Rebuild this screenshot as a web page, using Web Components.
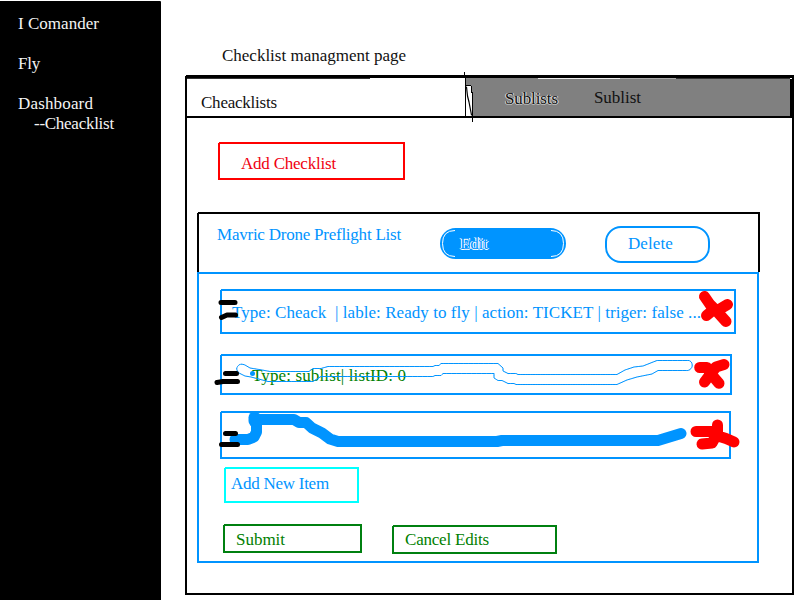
<!DOCTYPE html>
<html lang="en">
<head>
<meta charset="utf-8">
<title>Checklist managment page</title>
<style>
html,body{margin:0;width:800px;height:600px;overflow:hidden;background:#fff}
body{font:17px/20px "Liberation Serif",serif;color:#111}
</style>
</head>
<body>
<checklist-app></checklist-app>
<script>
const define=(name,html,setup)=>{
  const t=document.createElement('template');
  t.innerHTML=html;
  customElements.define(name,class extends HTMLElement{
    constructor(){super();this.attachShadow({mode:'open'}).append(t.content.cloneNode(true));}
    connectedCallback(){if(setup)setup(this);}
  });
};

// A line of text whose letter spacing is adjusted to fill the requested width.
define('fit-text',`<style>:host{display:block;white-space:pre;height:20px;width:max-content}span{display:inline-block}</style><span><slot></slot></span>`,el=>{
  const s=el.shadowRoot.querySelector('span'),w=+el.getAttribute('w');
  const natural=s.getBoundingClientRect().width;
  if(w&&natural)s.style.letterSpacing=((w-natural)/(el.textContent.length-.5))+'px';
});

define('side-nav',`<style>
:host{display:block;box-sizing:border-box;background:#000;color:#f4f4f4;padding:13px 0 0 18px;margin-top:1px;border-top-right-radius:1px}
nav{display:grid;gap:20px}.sub{margin-left:16px}
</style><nav><fit-text w="81">I Comander</fit-text><fit-text w="22">Fly</fit-text><div><fit-text w="75">Dashboard</fit-text><fit-text class="sub" w="80">--Cheacklist</fit-text></div></nav>`);

define('tab-bar',`<style>
:host{display:grid;grid-template-columns:279px 1fr;height:38px;border-bottom:2px solid #000}
.a{padding:15px 0 0 14px}
.b{display:flex;gap:36px;background:#808080;margin-top:1px;padding:9px 0 0 39px;border-right:2px solid #000}
.ghost{padding-top:1px;text-shadow:1px 0 #ddd,-1px 0 #ddd,0 1px #bbb}
</style><div class="a"><fit-text w="76">Cheacklists</fit-text></div><div class="b"><fit-text class="ghost" w="53">Sublists</fit-text><fit-text w="47">Sublist</fit-text></div>`);

define('outline-button',`<style>
:host{display:block;box-sizing:border-box;border:2px solid;flex:none}
:host([pill]){border-radius:16px}
:host([filled]){background:#0094ff;border-color:#0094ff;position:relative}
.ring{display:none}
:host([filled]) .ring{display:block;position:absolute;left:0;top:0}
:host([filled]) ::slotted(*){text-shadow:1px 0 #fff,-1px 0 #fff,0 .5px #fff}
</style><svg class="ring" width="122" height="27" viewBox="0 0 122 27" fill="none" stroke="#fff"><path d="M13 .5Q.5 .5 .5 13.5T13 26.5M109 .5Q121.5 .5 121.5 13.5T109 26.5"/></svg><slot></slot>`);

define('item-row',`<style>:host{display:block;box-sizing:border-box;border:2px solid #0094ff;margin-left:21px}</style><slot></slot>`);

define('list-card',`<style>
:host{display:block;width:563px;color:#0094ff}
header{box-sizing:border-box;height:60px;border:2px solid #000;border-bottom:0;display:flex;align-items:flex-start}
.title{margin:11px 0 0 18px}
.edit{width:126px;height:31px;margin:14px 0 0 39px;padding:4px 0 0 18px}
.del{width:105px;height:37px;margin:12px 0 0 39px;padding:6px 0 0 21px}
section{box-sizing:border-box;width:562px;height:291px;border:2px solid #0094ff;padding-top:15px}
.r1{width:516px;height:45px;padding:12px 0 0 10px}
.r2{width:512px;height:41px;margin-top:20px;padding:10px 0 0 30px;color:#008000}
.r3{width:511px;height:48px;margin-top:16px}
.new{width:135px;height:36px;margin:8px 0 0 25px;padding:5px 0 0 5px;border-color:#0ff}
footer{display:flex;align-items:flex-start;gap:30px;margin:21px 0 0 24px;color:#008000}
.sub{width:139px;height:29px;padding:4px 0 0 11px;border-color:#008010}
.can{width:165px;height:29px;margin-top:1px;padding:3px 0 0 11px;border-color:#008010}
</style>
<header><fit-text class="title" w="184">Mavric Drone Preflight List</fit-text>
<outline-button class="edit" pill filled><fit-text w="28">Edit</fit-text></outline-button>
<outline-button class="del" pill><fit-text w="45">Delete</fit-text></outline-button></header>
<section>
<item-row class="r1"><fit-text w="469">Type: Cheack  | lable: Ready to fly | action: TICKET | triger: false ...</fit-text></item-row>
<item-row class="r2"><fit-text w="154">Type: sublist| listID: 0</fit-text></item-row>
<item-row class="r3"></item-row>
<outline-button class="new"><fit-text w="98">Add New Item</fit-text></outline-button>
<footer><outline-button class="sub"><fit-text w="49">Submit</fit-text></outline-button><outline-button class="can"><fit-text w="84">Cancel Edits</fit-text></outline-button></footer>
</section>`);

define('page-panel',`<style>
:host{display:block;box-sizing:border-box;width:609px;height:520px;border:2px solid #000;border-top-width:3px}
.add{width:187px;height:38px;margin:24px 0 0 31px;padding:10px 0 0 21px;color:#f00010;border-color:#f00}
list-card{margin:32px 0 0 10px}
</style><tab-bar></tab-bar><outline-button class="add"><fit-text w="95">Add Checklist</fit-text></outline-button><list-card></list-card>`);

// Freehand pen strokes laid over the page.
define('ink-layer',`<style>:host{position:absolute;inset:0;pointer-events:none}svg{display:block}</style>
<svg width="800" height="600" viewBox="0 0 800 600" fill="none" stroke-linecap="round" stroke-linejoin="round">
<path d="M466 86H471L472 88V116H466Z" fill="#fff"/>
<g fill="#000" shape-rendering="crispEdges"><path d="M464 72h1v5h-1zM465 75h1v43h-1zM466 85h5v1h-5zM471 86h1v7h-1zM472 92h1v30h-1z"/></g>
<path d="M466.500 87L467.500 96L469 102L471.500 115" stroke="#000" stroke-width="1.200"/>
<g stroke-width="1" stroke-linecap="butt"><path d="M187 78.500H370" stroke="#333"/><path d="M466 78.500H538" stroke="#808080"/><path d="M538 78.500H620" stroke="#eee"/><path d="M620 78.500H676" stroke="#aaa"/><path d="M676 78.500H790" stroke="#333"/></g>
<g stroke="#0094ff" stroke-width="1" stroke-dasharray="2 .5">
<path d="M239 373Q235 369 238 366Q240 363 245 365L250 368L262 370L270 371.500H309L313 368.500H321L328 366.500H433L435 365.500H439L441 363.500H498L503 368V371L508 373.500H516L518 374.500H617L625 370L634 367L643 366L657 360.500H689Q693 362 692 367Q690 371 686 370.500H658L652 374L637 377L627 380L617 384.500H516L514 383.500H508L502 380.500H498L494 378V373.500H443L441 375.500H435L433 376.500H321L313 381.500H268L251 377L245 376Z"/>
</g><circle cx="252.500" cy="373.500" r="2.500" fill="#0094ff"/>
<g stroke="#0094ff" stroke-width="11"><path d="M235 439.500H248L254 437L256.500 432V423L254.500 418M256 419.500H294L299 422.500H306L312 428L322 433L330 439L338 441.500H497L502 440.500H658L681 433.500"/></g>
<path d="M254.500 417.500V421" stroke="#0094ff" stroke-width="12"/>
<g stroke="#000" stroke-width="5"><path d="M221 302.500H235M221.500 317.500L227 315H235.500M225.500 373.500H236.500M217 382.500L223 381.500H237.500M225.500 433.500H235.500M221.500 444.500H237.500"/></g>
<g stroke="#f00" stroke-width="11"><path d="M704.500 296.500L710 304.500L717 311.500L726 321.500M706.500 315.500L712 311L720 309L727.500 304.500M699.700 367.500H707L711 374L719 383.300M704.500 382L709 376L716 367L724 364.500M696 431.500H714L718 436L726 438.500L734 442M717.500 425V433L712 443L702 444"/></g>
<g fill="#fff" shape-rendering="crispEdges"><path d="M185 75h1v1h-1zM218 142h1v1h-1zM197 212h1v1h-1zM220 289h1v1h-1zM220 354h1v1h-1zM220 411h1v1h-1zM224 467h1v1h-1zM223 524h1v1h-1zM392 525h1v1h-1z"/></g>
</svg>`);

define('checklist-app',`<style>
:host{display:grid;grid-template-columns:161px 1fr;width:800px;height:600px;position:relative}
main{padding:46px 0 0 24px}.heading{margin:0 0 9px 37px}
</style><side-nav></side-nav><main><fit-text class="heading" w="184">Checklist managment page</fit-text><page-panel></page-panel></main><ink-layer></ink-layer>`);
</script>
</body>
</html>
